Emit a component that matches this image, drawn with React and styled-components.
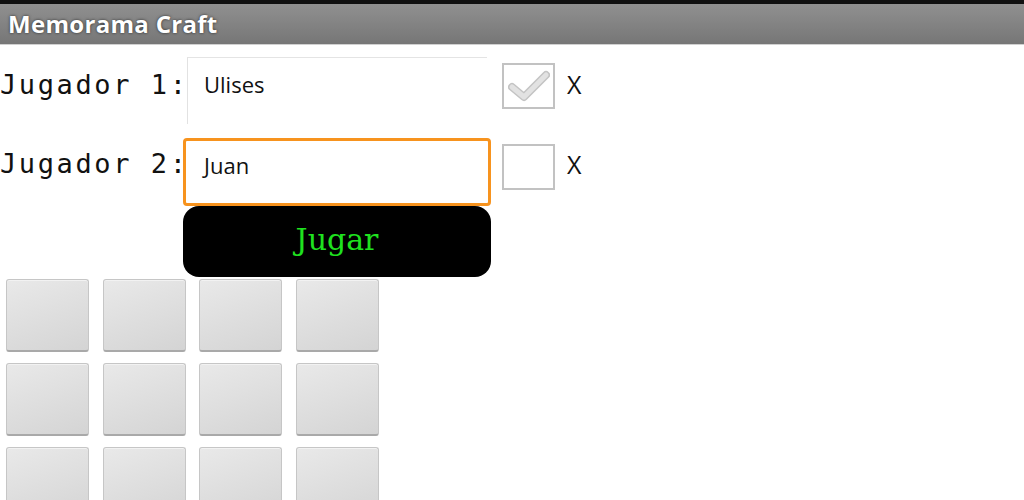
import React from 'react'
import styled, { createGlobalStyle } from 'styled-components'

const Global = createGlobalStyle`
  html, body {
    margin: 0;
    padding: 0;
    background: #ffffff;
    height: 500px;
    overflow: hidden;
  }
`

const Screen = styled.div`
  width: 1024px;
  height: 500px;
  overflow: hidden;
  display: flex;
  flex-direction: column;
  & > * {
    flex: none;
  }
`

const TitleBar = styled.div`
  box-sizing: border-box;
  height: 45px;
  border-top: 4px solid #111;
  background: linear-gradient(#909090, #767676);
  display: flex;
  align-items: center;
  padding: 0 0 2px 8px;
  font-family: "Open Sans", "Liberation Sans", sans-serif;
  font-weight: bold;
  font-size: 24px;
  letter-spacing: 0.3px;
  color: #fff;
  text-shadow: 0 0 3px rgba(0, 0, 0, 0.7);
  border-bottom: 1px solid #d0d0d0;
`

const Form = styled.div`
  display: flex;
  flex-direction: column;
  padding-top: 12px;
`

const Row = styled.div`
  display: flex;
  align-items: flex-start;
  margin-bottom: ${p => p.gap || 0}px;
`

const Label = styled.div`
  width: 187px;
  flex: none;
  font-family: "DejaVu Sans Mono", monospace;
  font-size: 27px;
  letter-spacing: 2.6px;
  color: #111;
  line-height: 1;
  padding-top: ${p => p.top}px;
  white-space: nowrap;
`

const Field = styled.div`
  box-sizing: border-box;
  width: 300px;
  height: 67px;
  border-top: 1px solid #e4e4e4;
  border-left: 1px solid #e2e2e2;
  padding: 11px 0 0 16px;
  font-family: "Open Sans", "Liberation Sans", sans-serif;
  font-size: 22px;
  color: #111;
`

const FocusField = styled(Field)`
  width: 308px;
  height: 68px;
  margin-left: -4px;
  border: 3px solid #f7931e;
  border-radius: 4px;
  padding: 9px 0 0 18px;
`

const Check = styled.div`
  box-sizing: border-box;
  width: 53px;
  height: 46px;
  margin: ${p => p.top}px 0 0 ${p => p.left}px;
  border: 2px solid #c2c2c2;
  display: flex;
  align-items: center;
  justify-content: center;
`

const Mark = styled.div`
  margin: ${p => p.top}px 0 0 12px;
  font-family: "Open Sans", "Liberation Sans", sans-serif;
  font-size: 25px;
  color: #111;
`

const PlayButton = styled.button`
  margin-left: 183px;
  width: 308px;
  height: 71px;
  background: #000;
  border: none;
  border-radius: 16px;
  font-family: "DejaVu Serif", serif;
  font-size: 30px;
  color: #1fe21f;
  padding: 0 0 4px;
`

const Board = styled.div`
  display: grid;
  grid-template-columns: repeat(4, 83px);
  grid-auto-rows: 73px;
  column-gap: 13.5px;
  row-gap: 11px;
  margin: 2px 0 0 6px;
`

const Tile = styled.div`
  box-sizing: border-box;
  background: linear-gradient(160deg, #e9e9e9, #d4d4d4);
  border: 1px solid #c6c6c6;
  border-bottom: 2px solid #a9a9a9;
  border-radius: 3px;
  box-shadow: inset 0 1px 0 #f2f2f2;
`

const CheckMark = () => (
  <svg width="42" height="34" viewBox="0 0 42 34">
    <path d="M4 18 L16 28 L38 6" fill="none" stroke="#c4c4c4" strokeWidth="8" strokeLinejoin="round" strokeLinecap="round" />
    <path d="M4 18 L16 28 L38 6" fill="none" stroke="#e2e2e2" strokeWidth="5" strokeLinejoin="round" strokeLinecap="round" />
  </svg>
)

export default function App() {
  return (
    <Screen>
      <Global />
      <TitleBar>Memorama Craft</TitleBar>
      <Form>
        <Row gap={14}>
          <Label top={14}>Jugador 1:</Label>
          <Field>Ulises</Field>
          <Check top={6} left={15}><CheckMark /></Check>
          <Mark top={10}>X</Mark>
        </Row>
        <Row>
          <Label top={12}>Jugador 2:</Label>
          <FocusField>Juan</FocusField>
          <Check top={6} left={11} />
          <Mark top={9}>X</Mark>
        </Row>
        <PlayButton>Jugar</PlayButton>
      </Form>
      <Board>
        {Array.from({ length: 12 }).map((_, i) => <Tile key={i} />)}
      </Board>
    </Screen>
  )
}
